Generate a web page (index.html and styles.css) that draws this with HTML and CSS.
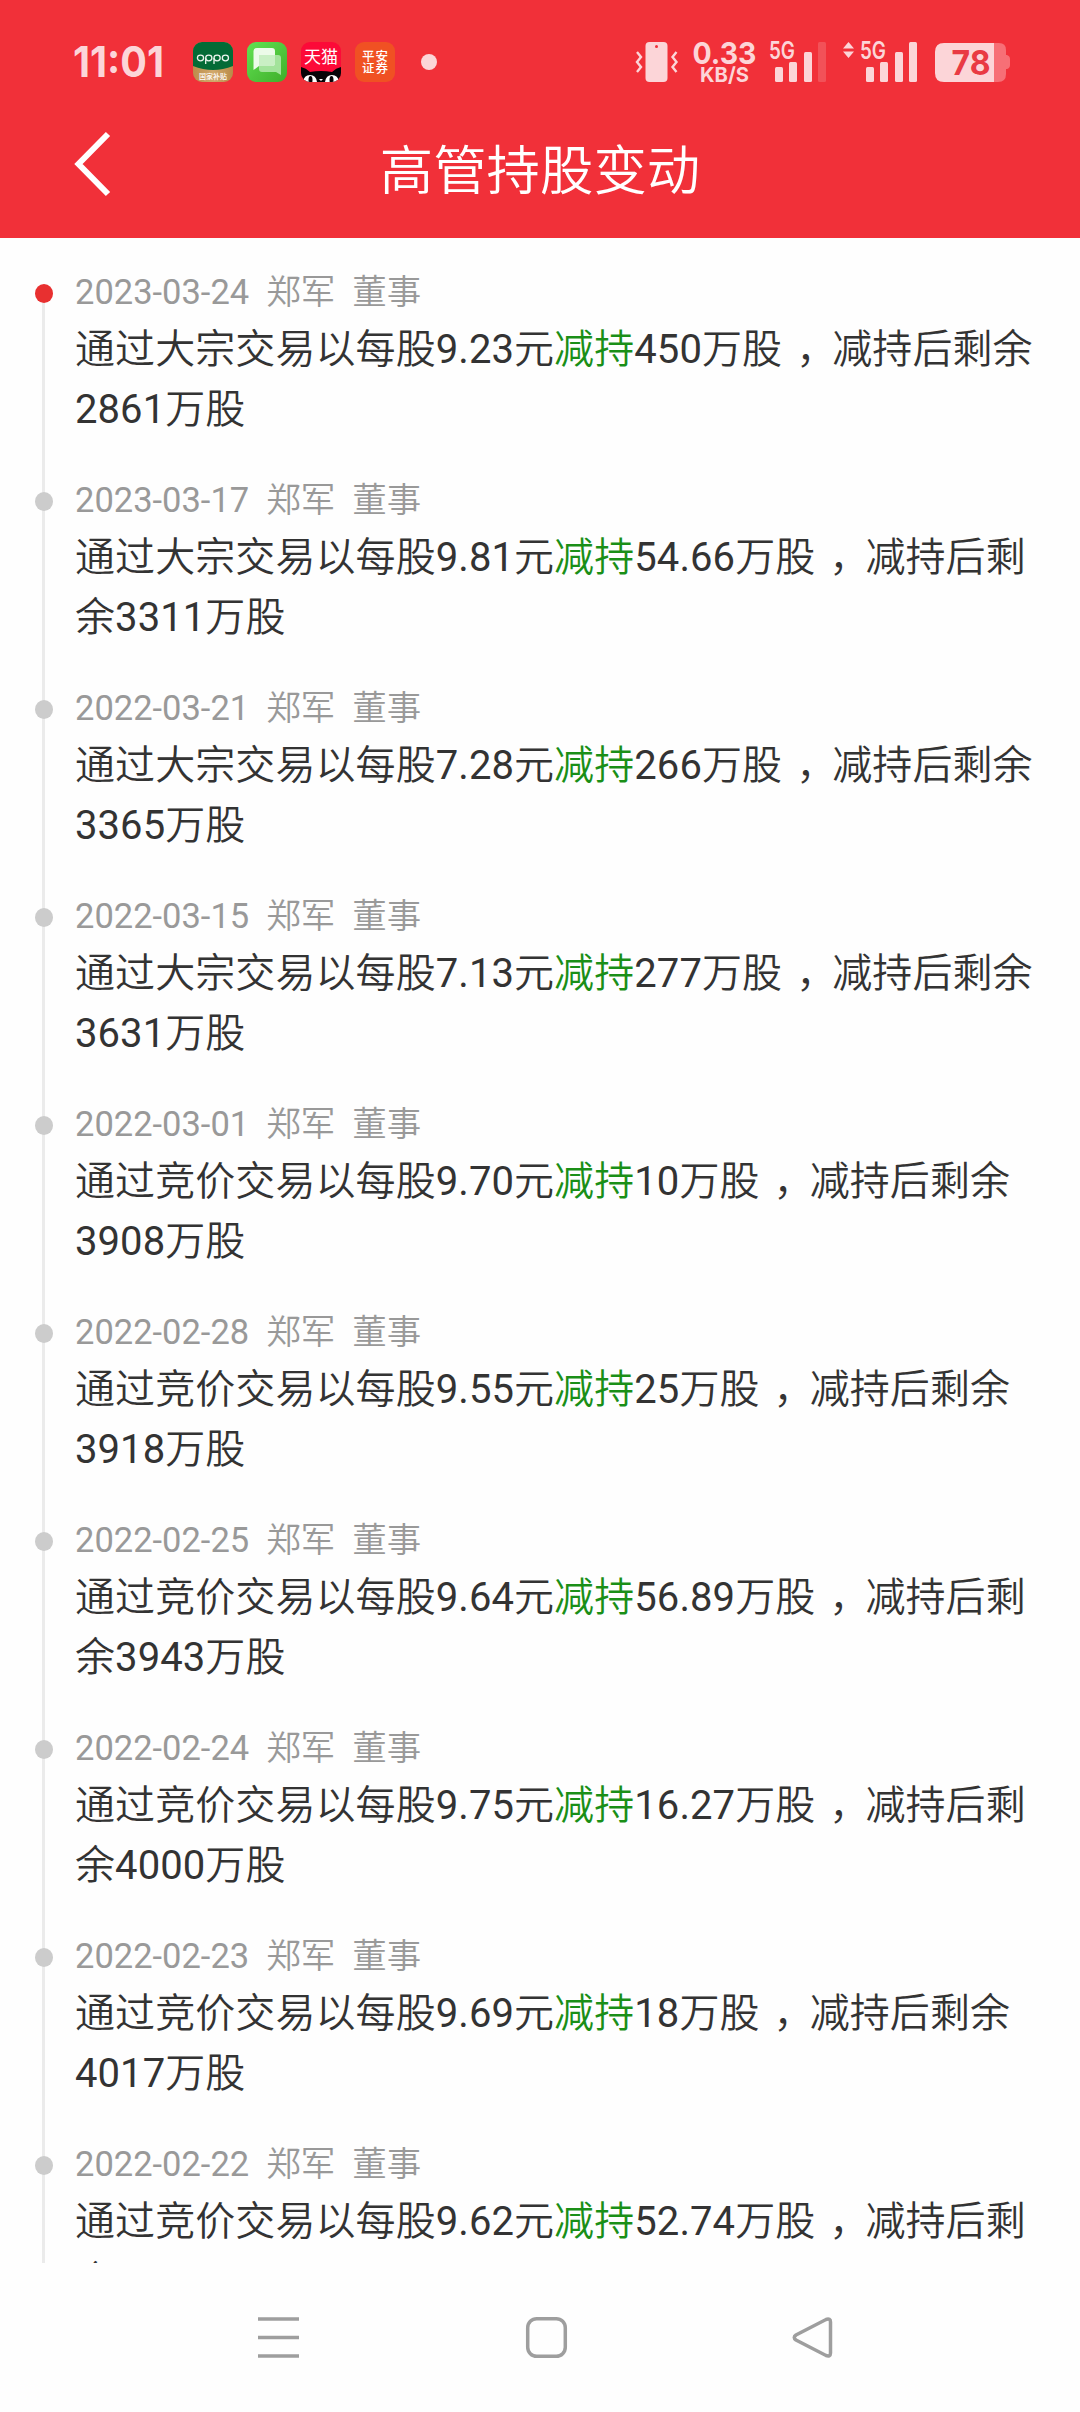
FILE: index.html
```html
<!DOCTYPE html>
<html lang="zh-CN">
<head>
<meta charset="utf-8">
<title>高管持股变动</title>
<link rel="stylesheet" href="styles.css">
</head>
<body>
<header class="top">
  <div class="status">
    <svg class="clock" width="96" height="44" viewBox="0 0 96 44"><text class="glyphs" x="2" y="36.500" font-size="42" textLength="91" lengthAdjust="spacingAndGlyphs">11:01</text></svg>
    <div class="apps">
      <svg width="40" height="40" viewBox="0 0 40 40">
        <defs><clipPath id="tile"><rect width="40" height="40" rx="9"/></clipPath>
        <linearGradient id="gold" x1="0" x2="1"><stop offset="0" stop-color="#bd8d4b"/><stop offset=".5" stop-color="#d2a96b"/><stop offset="1" stop-color="#b98a48"/></linearGradient></defs>
        <g clip-path="url(#tile)"><rect width="40" height="40" fill="url(#gold)"/><path d="M0 0H40V24Q20 32 0 24Z" fill="#036b36"/>
        <g fill="none" stroke="#e9f3ec" stroke-width="1.3"><ellipse cx="7.500" cy="16" rx="3.100" ry="2.800"/><path d="M12.700 22V16"/><ellipse cx="15.800" cy="16" rx="3.100" ry="2.800"/><path d="M21 22V16"/><ellipse cx="24.100" cy="16" rx="3.100" ry="2.800"/><ellipse cx="32.400" cy="16" rx="3.100" ry="2.800"/></g>
        <text class="cjk thin" x="6" y="36.700" font-size="7" textLength="28" fill="#fff">国家补贴</text></g>
      </svg>
      <svg width="40" height="40" viewBox="0 0 40 40">
        <defs><linearGradient id="leaf" x1="0" y1="0" x2="1" y2="1"><stop offset="0" stop-color="#62e252"/><stop offset="1" stop-color="#3fae2a"/></linearGradient></defs>
        <rect width="40" height="40" rx="9" fill="url(#leaf)"/>
        <path d="M15 13H31Q34 13 34 16V33L29 30H15Q12 30 12 27V16Q12 13 15 13Z" fill="#a3e39b"/>
        <path d="M10 6H25Q28 6 28 9V21Q28 24 25 24H12L6.500 28V9Q6.500 6 10 6Z" fill="#ecfbe9"/>
        <path d="M12 13H28V21Q28 24 25 24H12Z" fill="#c9efc4"/>
      </svg>
      <svg width="40" height="40" viewBox="0 0 40 40">
        <g clip-path="url(#tile)"><rect width="40" height="40" fill="#fc0a38"/>
        <text class="cjk light" x="3" y="21" font-size="17" textLength="34" fill="#fff">天猫</text>
        <path d="M0 25Q5 26 9 30Q20 28 31 30Q35 26 40 25V40H0Z" fill="#080407"/>
        <path d="M2 40Q3 33 9 33T16 40ZM24 40Q25 33 31 33T38 40Z" fill="#fff"/><ellipse cx="9.500" cy="38" rx="2" ry="4" fill="#080407"/><ellipse cx="30.500" cy="38" rx="2" ry="4" fill="#080407"/><path d="M18 37H22L20 39Z" fill="#fff"/></g>
      </svg>
      <svg width="40" height="40" viewBox="0 0 40 40"><rect width="40" height="40" rx="9" fill="#f05123"/>
        <g class="cjk thin" font-size="12.500" fill="#fff"><text x="7" y="19" textLength="26">平安</text><text x="7" y="30.500" textLength="26">证券</text></g></svg>
    </div>
    <span class="more"></span>
    <div class="system">
      <svg width="42" height="42" viewBox="0 0 42 42"><rect x="9.500" y="1" width="22" height="40" rx="4" fill="#fcd5d8"/><circle cx="20.500" cy="5.500" r="1.500" fill="#f13039"/><path d="M1 11L5 16L1 21L5 26L1 31M40.500 11L36.500 16L40.500 21L36.500 26L40.500 31" fill="none" stroke="#fcd5d8" stroke-width="2.400"/></svg>
      <svg class="speed" width="66" height="46" viewBox="0 0 66 46"><text class="glyphs" x="0.500" y="24.600" font-size="30.500" textLength="64" lengthAdjust="spacingAndGlyphs">0.33</text><text class="glyphs" x="8" y="43" font-size="20.500" textLength="49" lengthAdjust="spacingAndGlyphs">KB/S</text></svg>
      <svg class="sim" width="59" height="42" viewBox="0 0 59 42"><text class="glyphs net" x="0" y="18" font-size="24" textLength="26" lengthAdjust="spacingAndGlyphs">5G</text><g fill="#fcd5d8"><rect x="6" y="26" width="8" height="15" rx="1.500"/><rect x="20" y="21" width="8" height="20" rx="1.500"/><rect x="35" y="11" width="8" height="30" rx="1.500"/><rect x="49" y="1" width="8" height="40" rx="1.500" opacity=".2"/></g></svg>
      <svg class="sim2" width="76" height="42" viewBox="0 0 76 42"><path d="M0 7.500L5.500 1L11 7.500ZM0 10.500L5.500 17L11 10.500Z" fill="#fcd5d8"/><text class="glyphs net" x="17" y="18" font-size="24" textLength="26" lengthAdjust="spacingAndGlyphs">5G</text><g fill="#fcd5d8"><rect x="23" y="26" width="8" height="15" rx="1.500"/><rect x="37" y="21" width="8" height="20" rx="1.500"/><rect x="52" y="11" width="8" height="30" rx="1.500"/><rect x="66" y="1" width="8" height="40" rx="1.500"/></g></svg>
      <svg class="battery" width="76" height="42" viewBox="0 0 76 42"><path d="M59 2H64Q71 2 71 9V14H72Q75 15 75 18V24Q75 27 72 28H71V33Q71 41 63 41H59Z" fill="#f76f76"/><path d="M9 2H59V41H9Q0 41 0 32V11Q0 2 9 2Z" fill="#fcd5d8"/><text class="glyphs digits" x="16.500" y="33.500" font-size="34" textLength="39" lengthAdjust="spacingAndGlyphs">78</text></svg>
    </div>
  </div>
  <div class="titlebar">
    <svg class="back" width="40" height="68" viewBox="0 0 40 68"><path d="M35 4L5.500 34L35 64" fill="none" stroke="#fff" stroke-width="6"/></svg>
    <h1>高管持股变动</h1>
  </div>
</header>
<main class="timeline">
  <article class="entry latest"><div class="meta"><time>2023-03-24</time><span>郑军</span><span>董事</span></div><p>通过大宗交易以每股9.23元<em>减持</em>450万股 <i>，</i>减持后剩余2861万股</p></article>
  <article class="entry"><div class="meta"><time>2023-03-17</time><span>郑军</span><span>董事</span></div><p>通过大宗交易以每股9.81元<em>减持</em>54.66万股 <i>，</i>减持后剩余3311万股</p></article>
  <article class="entry"><div class="meta"><time>2022-03-21</time><span>郑军</span><span>董事</span></div><p>通过大宗交易以每股7.28元<em>减持</em>266万股 <i>，</i>减持后剩余3365万股</p></article>
  <article class="entry"><div class="meta"><time>2022-03-15</time><span>郑军</span><span>董事</span></div><p>通过大宗交易以每股7.13元<em>减持</em>277万股 <i>，</i>减持后剩余3631万股</p></article>
  <article class="entry"><div class="meta"><time>2022-03-01</time><span>郑军</span><span>董事</span></div><p>通过竞价交易以每股9.70元<em>减持</em>10万股 <i>，</i>减持后剩余3908万股</p></article>
  <article class="entry"><div class="meta"><time>2022-02-28</time><span>郑军</span><span>董事</span></div><p>通过竞价交易以每股9.55元<em>减持</em>25万股 <i>，</i>减持后剩余3918万股</p></article>
  <article class="entry"><div class="meta"><time>2022-02-25</time><span>郑军</span><span>董事</span></div><p>通过竞价交易以每股9.64元<em>减持</em>56.89万股 <i>，</i>减持后剩余3943万股</p></article>
  <article class="entry"><div class="meta"><time>2022-02-24</time><span>郑军</span><span>董事</span></div><p>通过竞价交易以每股9.75元<em>减持</em>16.27万股 <i>，</i>减持后剩余4000万股</p></article>
  <article class="entry"><div class="meta"><time>2022-02-23</time><span>郑军</span><span>董事</span></div><p>通过竞价交易以每股9.69元<em>减持</em>18万股 <i>，</i>减持后剩余4017万股</p></article>
  <article class="entry"><div class="meta"><time>2022-02-22</time><span>郑军</span><span>董事</span></div><p>通过竞价交易以每股9.62元<em>减持</em>52.74万股 <i>，</i>减持后剩余</p></article>
</main>
<nav class="navbar">
  <svg width="44" height="44" viewBox="0 0 44 44"><path d="M2 3H43M2 21.500H43M2 40H43"/></svg>
  <svg width="44" height="44" viewBox="0 0 44 44"><rect x="3.700" y="2.700" width="37.600" height="37.600" rx="9"/></svg>
  <svg width="44" height="44" viewBox="0 0 44 44"><path d="M34 3.500Q38.500 2 38.500 6V37Q38.500 41 34 39.500L4 24Q0.500 21.500 4 19Z"/></svg>
</nav>
</body>
</html>
```
FILE: styles.css
```css
* { box-sizing: border-box; }
body {
  margin: 0;
  width: 1080px;
  height: 2412px;
  overflow: hidden;
  display: flex;
  flex-direction: column;
  background: #fefefe;
  color: #333;
  font-family: Roboto, "Noto Sans CJK SC DemiLight", "Noto Sans CJK SC", sans-serif;
}
svg { display: block; flex: none; overflow: visible; }
.top { height: 238px; flex: none; background: #f13039; color: #fff; }
.status { height: 124px; display: flex; align-items: center; padding: 0 69px 0 71px; }
.glyphs { font-family: Inter, sans-serif; font-weight: 700; fill: #fcd5d8; }
.glyphs.net { font-weight: 600; }
.glyphs.digits { fill: #e93a43; }
.cjk { font-family: "Noto Sans CJK SC", sans-serif; font-weight: 700; }
.cjk.thin { font-weight: 500; }
.cjk.light { font-weight: 400; }
.apps { display: flex; gap: 14px; margin-left: 26px; }
.more { width: 16px; height: 16px; border-radius: 50%; background: #fcd5d8; margin-left: 26px; }
.system { display: flex; align-items: center; margin-left: auto; }
.speed { margin-left: 14px; }
.sim { margin-left: 11px; }
.sim2 { margin-left: 15px; }
.battery { margin-left: 16px; }
.titlebar { height: 114px; display: grid; grid-template-columns: 110px 1fr 110px; align-items: center; }
.back { margin: -34px 0 0 73px; }
h1 { margin: -19px 0 0; text-align: center; font-size: 53.400px; font-weight: 400; line-height: 80px; }
.timeline { height: 2025px; flex: none; overflow: hidden; padding-top: 23px; }
.entry {
  position: relative;
  height: 208px;
  padding: 5px 35px 0 75px;
}
.entry::before {
  content: "";
  position: absolute;
  left: 42px;
  top: 0;
  width: 3px;
  height: 208px;
  background: #ebebeb;
}
.latest::before { top: 32px; height: 176px; }
.entry::after {
  content: "";
  position: absolute;
  left: 35px;
  top: 23px;
  width: 18px;
  height: 19px;
  border-radius: 50%;
  background: #ccc;
}
.latest::after { background: #e83030; }
.meta { display: flex; gap: 17px; height: 54px; line-height: 53px; font-size: 34.500px; color: #999; }
p { margin: 0; font-size: 40px; line-height: 60px; letter-spacing: 0.080px; }
em { font-style: normal; color: #1a8f17; }
i { font-style: normal; font-weight: 300; margin: 0 -4px 0 4px; }
.navbar { flex: 1; display: grid; grid-template-columns: 44px 44px 44px; gap: 224px; padding: 53px 0 0 256px; align-content: start; }
.navbar svg { fill: none; stroke: #9e9e9e; stroke-width: 3.500; }
```
